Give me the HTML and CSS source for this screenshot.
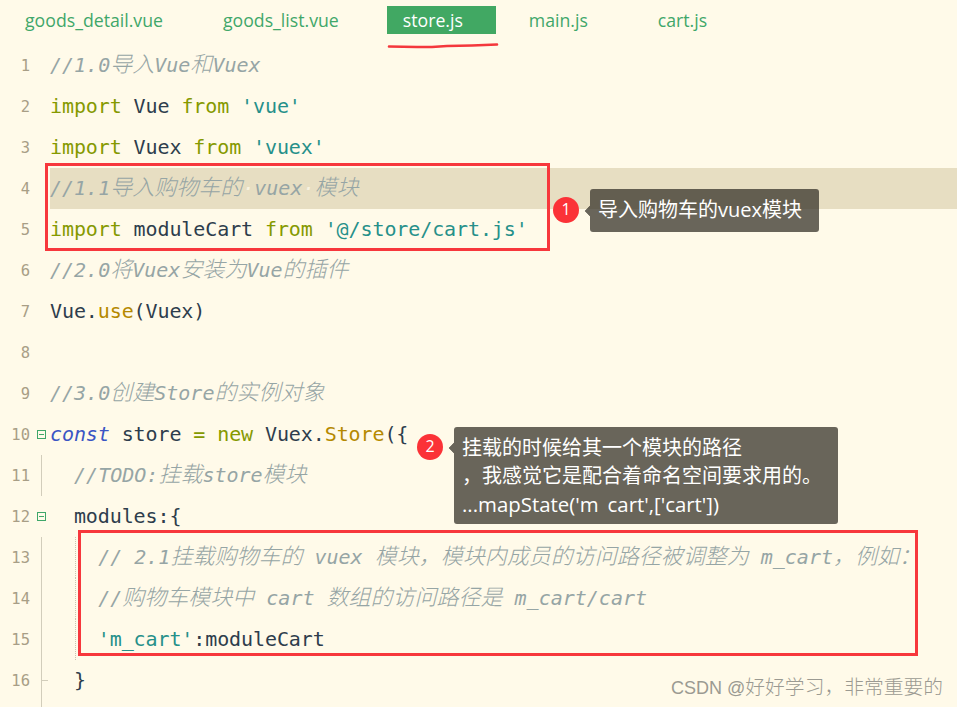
FILE: index.html
```html
<!DOCTYPE html>
<html lang="zh-CN">
<head>
<meta charset="utf-8">
<title>store.js</title>
<link rel="stylesheet" href="styles.css">
</head>
<body>
<div class="page">
  <nav class="tabs">
    <span class="tab t1">goods_detail.vue</span>
    <span class="tab t2">goods_list.vue</span>
    <span class="tab t3 active">store.js</span>
    <span class="tab t4">main.js</span>
    <span class="tab t5">cart.js</span>
  </nav>
  <main class="code">
    <div class="line"><span class="num">1</span><span class="fold"></span><span class="src c">//1.0<span class="z">导入</span>Vue<span class="z">和</span>Vuex</span></div>
    <div class="line"><span class="num">2</span><span class="fold"></span><span class="src"><span class="k">import</span> Vue <span class="k">from</span> <span class="s">'vue'</span></span></div>
    <div class="line"><span class="num">3</span><span class="fold"></span><span class="src"><span class="k">import</span> Vuex <span class="k">from</span> <span class="s">'vuex'</span></span></div>
    <div class="line"><span class="num">4</span><span class="fold"></span><span class="src c hl">//1.1<span class="z">导入购物车的</span><span class="ws">·</span>vuex<span class="ws">·</span><span class="z">模块</span></span></div>
    <div class="line"><span class="num">5</span><span class="fold"></span><span class="src"><span class="k">import</span> moduleCart <span class="k">from</span> <span class="s">'@/store/cart.js'</span></span></div>
    <div class="line"><span class="num">6</span><span class="fold"></span><span class="src c">//2.0<span class="z">将</span>Vuex<span class="z">安装为</span>Vue<span class="z">的插件</span></span></div>
    <div class="line"><span class="num">7</span><span class="fold"></span><span class="src">Vue.<span class="f">use</span>(Vuex)</span></div>
    <div class="line"><span class="num">8</span><span class="fold"></span><span class="src"></span></div>
    <div class="line"><span class="num">9</span><span class="fold"></span><span class="src c">//3.0<span class="z">创建</span>Store<span class="z">的实例对象</span></span></div>
    <div class="line"><span class="num">10</span><span class="fold"><i class="box"></i></span><span class="src"><span class="d">const</span> store <span class="k">=</span> <span class="k">new</span> Vuex.<span class="f">Store</span>({</span></div>
    <div class="line"><span class="num">11</span><span class="fold guide"></span><span class="src c">  //TODO:<span class="z">挂载</span>store<span class="z">模块</span></span></div>
    <div class="line"><span class="num">12</span><span class="fold"><i class="box"></i></span><span class="src">  modules:{</span></div>
    <div class="line"><span class="num">13</span><span class="fold guide"></span><span class="src c dots">    // 2.1<span class="z">挂载购物车的</span> vuex <span class="z">模块，模块内成员的访问路径被调整为</span> m_cart<span class="z">，例如：</span></span></div>
    <div class="line"><span class="num">14</span><span class="fold guide"></span><span class="src c dots">    //<span class="z">购物车模块中</span> cart <span class="z">数组的访问路径是</span> m_cart/cart</span></div>
    <div class="line"><span class="num">15</span><span class="fold guide"></span><span class="src dots">    <span class="s">'m_cart'</span>:moduleCart</span></div>
    <div class="line"><span class="num">16</span><span class="fold guide tick"></span><span class="src">  }</span></div>
    <div class="line"><span class="num"></span><span class="fold guide"></span><span class="src"></span></div>
  </main>

  <div class="redbox rb1"></div>
  <div class="redbox rb2"></div>
  <svg class="scribble" width="112" height="8" viewBox="0 0 112 8"><path d="M2 5.5 L30 6 L45 6 L60 5 L85 4.5 L110 3.5" fill="none" stroke="#f4373c" stroke-width="2.6" stroke-linecap="round"/></svg>

  <span class="badge b1">1</span>
  <div class="bubble bb1">导入购物车的vuex模块</div>
  <span class="badge b2">2</span>
  <div class="bubble bb2">挂载的时候给其一个模块的路径<br>，我感觉它是配合着命名空间要求用的。<br><span class="call">...mapState('m<span class="clip">_</span>cart',['cart'])</span></div>

  <div class="mark">CSDN @<span class="mark-z">好好学习，非常重要的</span></div>
</div>
</body>
</html>
```
FILE: styles.css
```css
html, body { margin: 0; padding: 0; height: 100%; background: #fffae9; overflow: hidden; }
.page { position: relative; width: 957px; height: 707px; overflow: hidden; background: #fffae9; }

.tabs { display: flex; align-items: flex-start; height: 45px; padding-top: 6px; box-sizing: border-box; font: 17.7px/28px "Open Sans", "Noto Sans", sans-serif; color: #3fa76a; }
.tab { display: block; height: 28px; padding: 0 16px; white-space: nowrap; }
.t1 { margin-left: 9px; }
.t2 { margin-left: 28px; }
.t3 { margin-left: 32px; width: 77px; }
.t4 { margin-left: 17px; width: 77px; }
.t5 { margin-left: 20px; }
.active { background: #41a863; color: #fff; }

.code { font: 20px/41px "DejaVu Sans Mono", "Noto Sans CJK SC", monospace; color: #2e3d4c; }
.line { display: flex; height: 41px; }
.num { width: 32px; padding: 1px 2px 0 0; box-sizing: border-box; text-align: right; font-size: 15.5px; color: #a89e86; }
.fold { position: relative; width: 18px; flex: none; }
.box { position: absolute; left: 5px; top: 16px; width: 7px; height: 7px; border: 1px solid #3fa76a; }
.box::after { content: ""; position: absolute; left: 1px; right: 1px; top: 3px; height: 1px; background: #3fa76a; }
.guide::before { content: ""; position: absolute; left: 9px; top: 0; bottom: 0; width: 1px; background: #d2cdbb; }
.tick::after { content: ""; position: absolute; left: 9px; top: 20px; width: 7px; height: 1px; background: #d2cdbb; }
.src { flex: 1; white-space: pre; position: relative; letter-spacing: -0.1px; }
.hl { background: #e7dec2; }
.dots::before { content: ""; position: absolute; left: 25px; top: 0; bottom: 0; border-left: 1px dotted #c9c4b0; }

.c { font-style: italic; color: #96a5a5; letter-spacing: 0; }
.z { font-size: 22px; font-weight: 300; line-height: 0; }
.ws { color: #f7f2e0; }
.k { color: #859900; }
.s { color: #26908a; }
.d { font-style: italic; color: #3a55c4; }
.f { color: #b58900; }

.redbox { position: absolute; border: 3px solid #f7373c; box-sizing: border-box; }
.rb1 { left: 45px; top: 163px; width: 505px; height: 88px; }
.rb2 { left: 78px; top: 530px; width: 840px; height: 126px; }
.scribble { position: absolute; left: 387px; top: 41px; }

.badge { position: absolute; width: 26px; height: 26px; border-radius: 50%; background: #fb3237; color: #fff; font: 16px/25px "Open Sans", sans-serif; text-align: center; }
.b1 { left: 553px; top: 197px; }
.b2 { left: 417px; top: 434px; }

.bubble { position: absolute; box-sizing: border-box; border-radius: 3px; background: rgba(52, 48, 40, 0.74); color: #fff; font: 20px/28px "Open Sans", "Noto Sans CJK SC", sans-serif; padding: 7px 8px; white-space: nowrap; }
.bubble::before { content: ""; position: absolute; left: -4px; width: 8px; height: 8px; background: rgba(52, 48, 40, 0.74); transform: rotate(45deg); clip-path: polygon(0 0, 0 100%, 100% 100%); }
.bb1 { left: 590px; top: 189px; width: 229px; height: 43px; }
.bb1::before { top: 18px; }
.bb2 { left: 454px; top: 427px; width: 384px; height: 97px; }
.bb2::before { top: 17px; }
.call { font-size: 20.4px; }
.clip { color: transparent; }

.mark { position: absolute; left: 671px; top: 676px; font: 18px/24px "Liberation Sans", "Noto Sans CJK SC", sans-serif; color: #9b9a92; white-space: nowrap; }
.mark-z { font-size: 19.8px; font-weight: 300; line-height: 0; }
```
